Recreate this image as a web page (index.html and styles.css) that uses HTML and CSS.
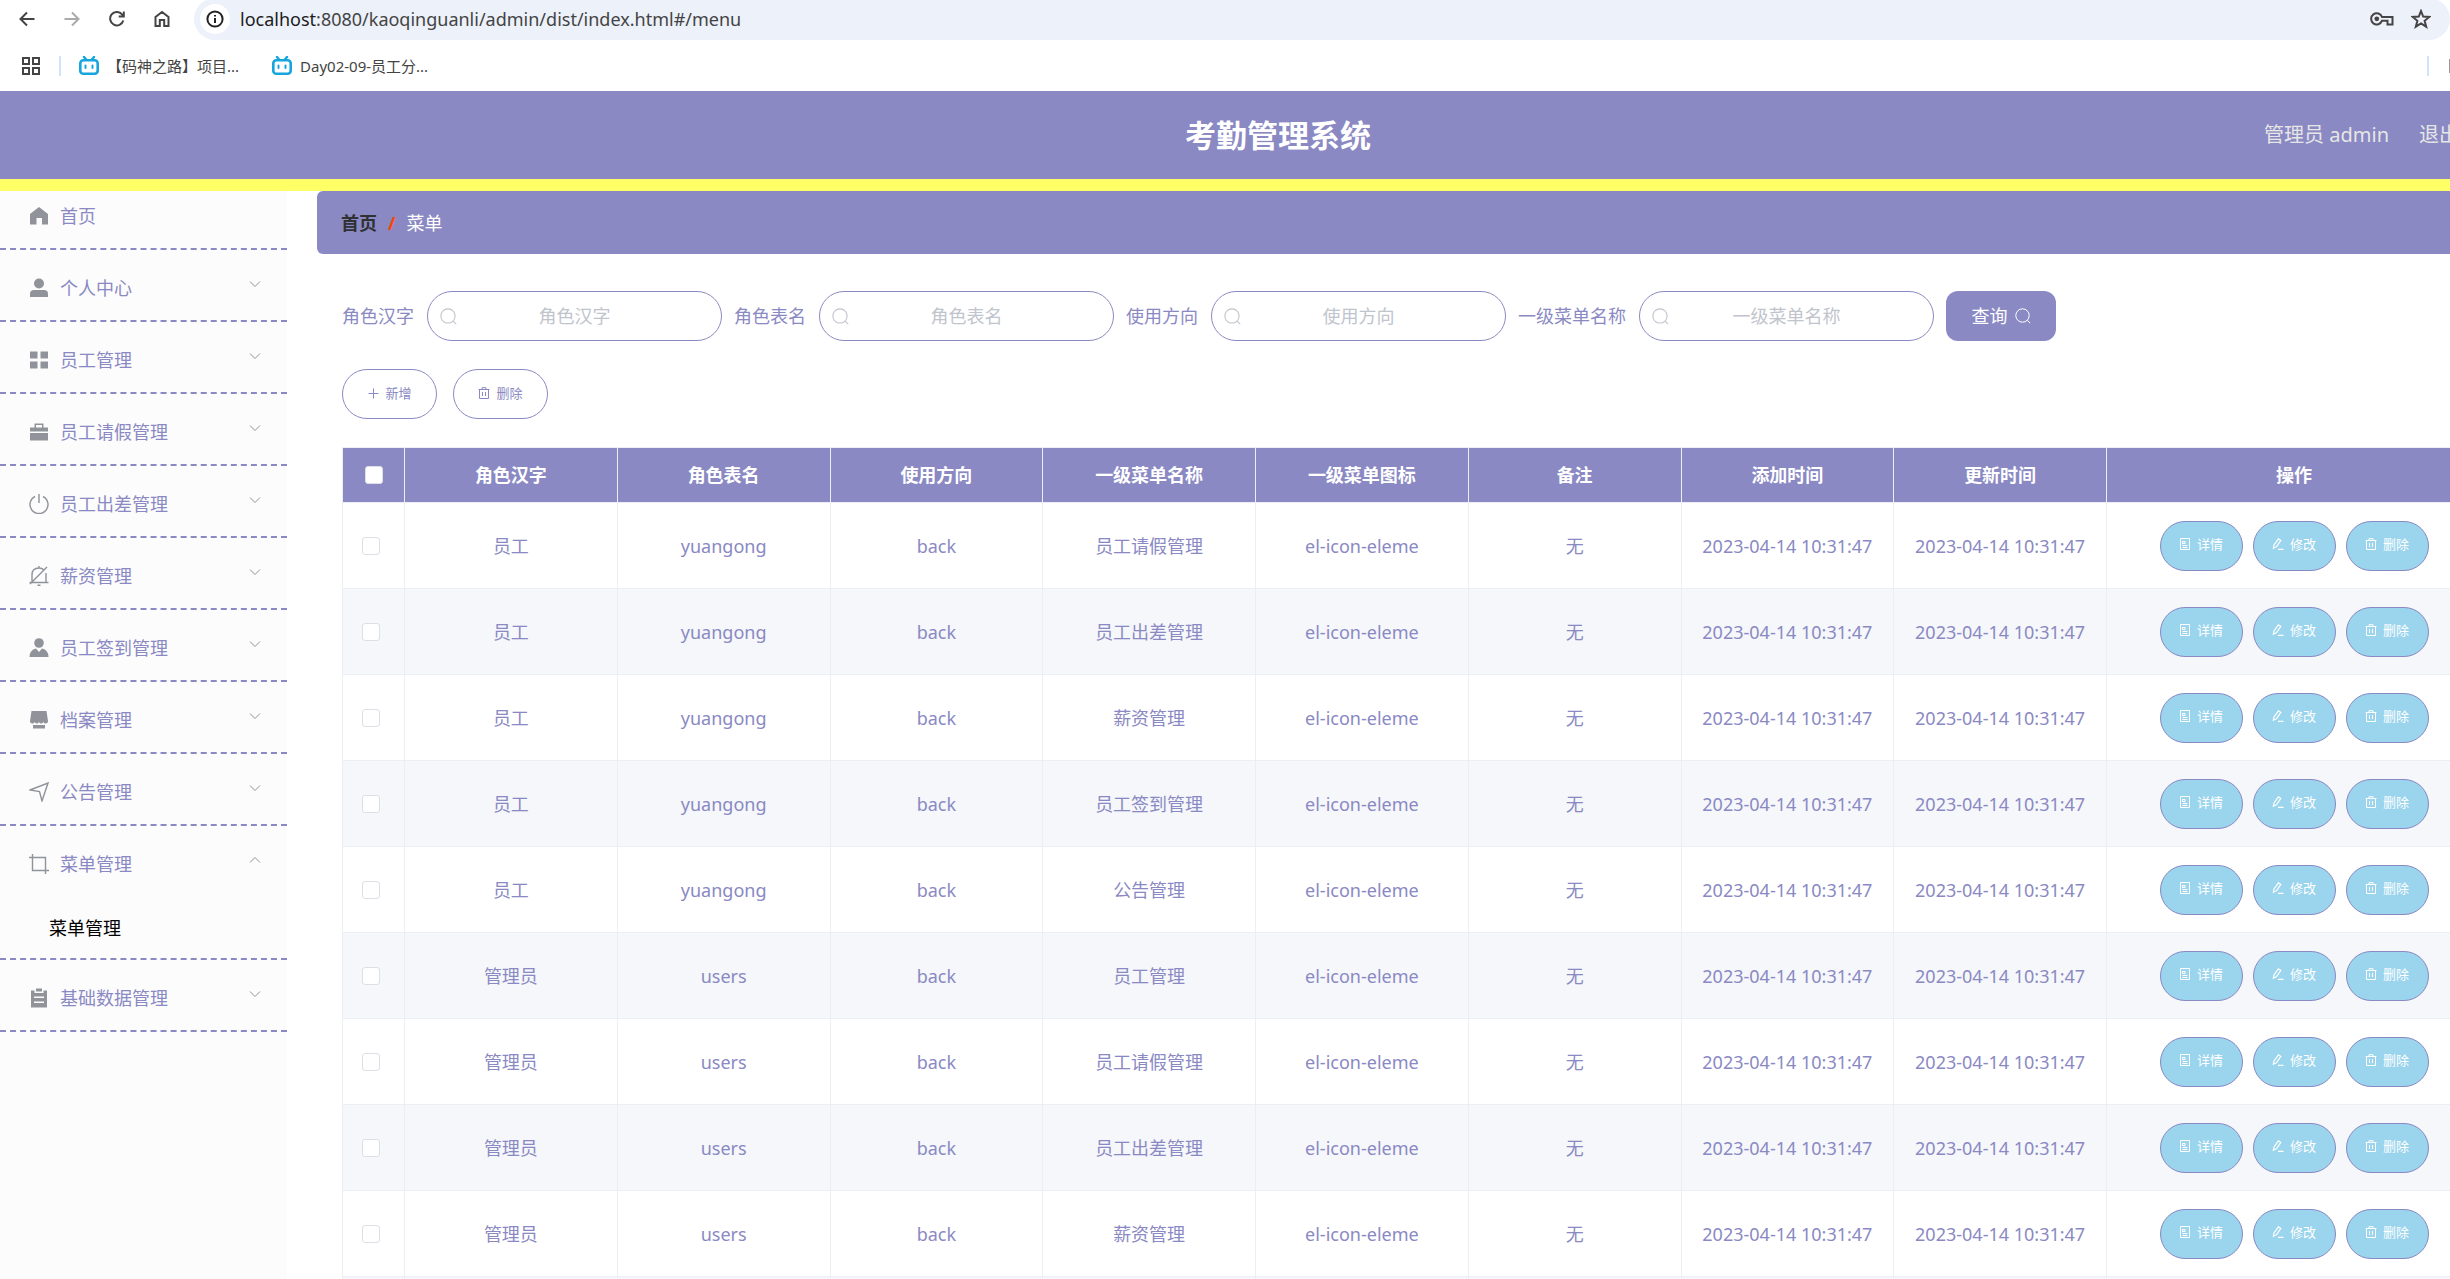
FILE: index.html
```html
<!DOCTYPE html>
<html lang="zh-CN">
<head>
<meta charset="utf-8">
<title>考勤管理系统</title>
<link rel="stylesheet" href="styles.css">
</head>
<body>
<svg class="sprite" aria-hidden="true">
  <symbol id="i-search" viewBox="0 0 16 16"><circle cx="7.5" cy="7.5" r="6.7"/><path d="M12.3 12.3L15.2 15.2"/></symbol>
  <symbol id="i-down" viewBox="0 0 12 8"><path d="M1 1.5L6 6.5L11 1.5"/></symbol>
  <symbol id="i-up" viewBox="0 0 12 8"><path d="M1 6.5L6 1.5L11 6.5"/></symbol>
  <symbol id="i-plus" viewBox="0 0 12 12"><path d="M6.5 1.500V11.500M1.500 6.500H11.500"/></symbol>
  <symbol id="i-trash" viewBox="0 0 12 12"><path d="M0.5 2.5H11.5M1.5 2.5V11.5H10.5V2.5M4 2.5V0.7H8V2.5M4.5 5V9M7.5 5V9"/></symbol>
  <symbol id="i-doc" viewBox="0 0 12 12"><path d="M1.5 0.5H10.5V11.5H1.5ZM3.5 3.5H6V5.500H3.500ZM3.500 7.500H8.500M3.500 9.500H8.500"/></symbol>
  <symbol id="i-edit" viewBox="0 0 12 12"><path d="M1.3 10.3L2 7L6.4 0.8L8.8 2.4L4.4 8.8ZM6 11.3H11.5" stroke-width="1.2"/></symbol>
  <symbol id="i-bili" viewBox="0 0 20 20"><path d="M5 1L7.5 4M15 1L12.5 4" stroke="#16a5dc" stroke-width="2.4" stroke-linecap="round"/><rect x="1.3" y="4.3" width="17.4" height="13.4" rx="3" fill="#fff" stroke="#16a5dc" stroke-width="2.6"/><path d="M6.5 9.5V12M13.5 9.5V12" stroke="#16a5dc" stroke-width="2" stroke-linecap="round"/></symbol>
</svg>

<div class="browser">
  <div class="toolbar">
    <div class="nav">
      <button type="button" aria-label="后退"><svg viewBox="0 0 16 16"><path d="M15.5 8H2M8 1.5L1.5 8L8 14.5"/></svg></button>
      <button type="button" class="off" aria-label="前进"><svg viewBox="0 0 16 16"><path d="M0.5 8H14M8 1.5L14.5 8L8 14.5"/></svg></button>
      <button type="button" aria-label="刷新"><svg viewBox="0 0 16 16"><path d="M14.3 9.5A6.7 6.7 0 1 1 13 3.4L14.5 5M14.8 0.5V5.6H9.7"/></svg></button>
      <button type="button" aria-label="主页"><svg viewBox="0 0 16 16"><path d="M1.5 15V6L8 1L14.5 6V15H10.2V9H5.8V15Z"/></svg></button>
    </div>
    <div class="address">
      <span class="info"><svg viewBox="0 0 18 18"><circle cx="9" cy="9" r="7.6"/><path d="M9 8V13M9 5V6.6"/></svg></span>
      <span class="url"><b>localhost</b>:8080/kaoqinguanli/admin/dist/index.html#/menu</span>
      <svg class="key" viewBox="0 0 24 14"><path d="M12 5H22.5V12.5H17.5V8.7H12A5.6 5.6 0 1 1 12 5Z"/><circle class="dot" cx="6.8" cy="6.8" r="2.4"/></svg>
      <svg class="star" viewBox="0 0 20 20"><path d="M10 2L12.2 7.6L18.3 7.9L13.6 11.8L15.2 17.7L10 14.4L4.8 17.7L6.4 11.8L1.7 7.9L7.8 7.6Z"/></svg>
    </div>
  </div>
  <div class="bookmarks">
    <svg class="grid" viewBox="0 0 18 18"><path d="M1 1H7V7H1ZM11 1H17V7H11ZM1 11H7V17H1ZM11 11H17V17H11Z"/></svg>
    <span class="sep"></span>
    <a href="#"><svg viewBox="0 0 20 20"><use href="#i-bili"/></svg>【码神之路】项目...</a>
    <a href="#"><svg viewBox="0 0 20 20"><use href="#i-bili"/></svg>Day02-09-员工分...</a>
    <span class="sep end"></span>
    <span class="folder"></span>
  </div>
</div>

<div class="app">
  <header class="header">
    <h1>考勤管理系统</h1>
    <div class="user"><span>管理员 admin</span><a href="#">退出登录</a></div>
  </header>
  <div class="body">
    <nav class="side">
      <ul>
        <li><a href="#"><svg class="ic solid" viewBox="0 0 20 20"><path d="M10 1L19 8V18.5H13V12H7.500V18.500H1V8Z"/></svg>首页</a></li>
        <li><a href="#"><svg class="ic solid" viewBox="0 0 20 20"><circle cx="10" cy="5.500" r="5"/><path d="M1 19V16Q1 12 5 12H15Q19 12 19 16V19Z"/></svg>个人中心<svg class="arrow"><use href="#i-down"/></svg></a></li>
        <li><a href="#"><svg class="ic solid" viewBox="0 0 20 20"><path d="M1 1.500H8.500V8.500H1ZM11.500 1.500H19V8.500H11.500ZM1 11.500H8.500V18.500H1ZM11.500 11.500H19V18.500H11.500Z"/></svg>员工管理<svg class="arrow"><use href="#i-down"/></svg></a></li>
        <li><a href="#"><svg class="ic solid" viewBox="0 0 20 20"><path d="M1 5.500H5.500V1.500H14.500V5.500H19V9.500H1ZM7 3V5.500H13V3ZM1 11H19V18.500H1Z" fill-rule="evenodd"/></svg>员工请假管理<svg class="arrow"><use href="#i-down"/></svg></a></li>
        <li><a href="#"><svg class="ic" viewBox="0 0 20 20"><path d="M10 0V9M6 2.500A9 9 0 1 0 14 2.500"/></svg>员工出差管理<svg class="arrow"><use href="#i-down"/></svg></a></li>
        <li><a href="#"><svg class="ic" viewBox="0 0 20 20"><path d="M0.500 16.500H19.500M3 16V9Q3 2 10 2Q13 2 15 4M17 7V16M1 18L18 1M10 0V2M8.500 19.300H11.500"/></svg>薪资管理<svg class="arrow"><use href="#i-down"/></svg></a></li>
        <li><a href="#"><svg class="ic solid" viewBox="0 0 20 20"><circle cx="10" cy="5" r="4.800"/><path d="M0.500 19Q0.500 12 7 10.500L10 14L13 10.500Q19.500 12 19.500 19Z"/></svg>员工签到管理<svg class="arrow"><use href="#i-down"/></svg></a></li>
        <li><a href="#"><svg class="ic solid" viewBox="0 0 20 20"><path d="M2.500 1H17.500L19 11Q19 13.500 16.500 13.500Q15 13.500 14.300 12Q13.500 13.500 12 13.500Q10.800 13.500 10 12Q9.200 13.500 8 13.500Q6.500 13.500 5.700 12Q5 13.500 3.500 13.500Q1 13.500 1 11ZM4 15H16V18.500H4Z"/></svg>档案管理<svg class="arrow"><use href="#i-down"/></svg></a></li>
        <li><a href="#"><svg class="ic" viewBox="0 0 20 20"><path d="M1 8L19 1L13 19L10.500 9.500Z"/></svg>公告管理<svg class="arrow"><use href="#i-down"/></svg></a></li>
        <li><a href="#"><svg class="ic" viewBox="0 0 20 20"><path d="M0 3.500H16.500V20M3.500 0V16.500H20"/></svg>菜单管理<svg class="arrow"><use href="#i-up"/></svg></a>
          <a class="sub" href="#">菜单管理</a></li>
        <li><a href="#"><svg class="ic solid" viewBox="0 0 20 20"><path d="M2 2.500H5.500V5H14.500V2.500H18V19.500H2ZM7 0.500H13V3.500H7ZM5 8.500V10H15V8.500ZM5 13.500V15H15V13.500Z" fill-rule="evenodd"/></svg>基础数据管理<svg class="arrow"><use href="#i-down"/></svg></a></li>
      </ul>
    </nav>
    <main class="main">
      <div class="crumb"><b>首页</b><i>/</i><span>菜单</span></div>
      <form class="search">
        <label for="f1">角色汉字</label><span class="field"><svg><use href="#i-search"/></svg><input id="f1" type="text" placeholder="角色汉字"></span>
        <label for="f2">角色表名</label><span class="field"><svg><use href="#i-search"/></svg><input id="f2" type="text" placeholder="角色表名"></span>
        <label for="f3">使用方向</label><span class="field"><svg><use href="#i-search"/></svg><input id="f3" type="text" placeholder="使用方向"></span>
        <label for="f4">一级菜单名称</label><span class="field"><svg><use href="#i-search"/></svg><input id="f4" type="text" placeholder="一级菜单名称"></span>
        <button type="button" class="query">查询<svg><use href="#i-search"/></svg></button>
      </form>
      <div class="tools">
        <button type="button" class="pill"><svg><use href="#i-plus"/></svg>新增</button>
        <button type="button" class="pill"><svg><use href="#i-trash"/></svg>删除</button>
      </div>
      <table class="list">
        <colgroup><col class="c-check"><col><col><col><col><col><col><col><col><col class="c-ops"></colgroup>
        <thead>
          <tr><th><input type="checkbox" aria-label="全选"></th><th>角色汉字</th><th>角色表名</th><th>使用方向</th><th>一级菜单名称</th><th>一级菜单图标</th><th>备注</th><th>添加时间</th><th>更新时间</th><th>操作</th></tr>
        </thead>
        <tbody>
          <tr><td><input type="checkbox" aria-label="选择"></td><td>员工</td><td>yuangong</td><td>back</td><td>员工请假管理</td><td>el-icon-eleme</td><td>无</td><td>2023-04-14 10:31:47</td><td>2023-04-14 10:31:47</td><td><div class="ops"><button type="button"><svg><use href="#i-doc"/></svg>详情</button><button type="button"><svg><use href="#i-edit"/></svg>修改</button><button type="button"><svg><use href="#i-trash"/></svg>删除</button></div></td></tr>
          <tr><td><input type="checkbox" aria-label="选择"></td><td>员工</td><td>yuangong</td><td>back</td><td>员工出差管理</td><td>el-icon-eleme</td><td>无</td><td>2023-04-14 10:31:47</td><td>2023-04-14 10:31:47</td><td><div class="ops"><button type="button"><svg><use href="#i-doc"/></svg>详情</button><button type="button"><svg><use href="#i-edit"/></svg>修改</button><button type="button"><svg><use href="#i-trash"/></svg>删除</button></div></td></tr>
          <tr><td><input type="checkbox" aria-label="选择"></td><td>员工</td><td>yuangong</td><td>back</td><td>薪资管理</td><td>el-icon-eleme</td><td>无</td><td>2023-04-14 10:31:47</td><td>2023-04-14 10:31:47</td><td><div class="ops"><button type="button"><svg><use href="#i-doc"/></svg>详情</button><button type="button"><svg><use href="#i-edit"/></svg>修改</button><button type="button"><svg><use href="#i-trash"/></svg>删除</button></div></td></tr>
          <tr><td><input type="checkbox" aria-label="选择"></td><td>员工</td><td>yuangong</td><td>back</td><td>员工签到管理</td><td>el-icon-eleme</td><td>无</td><td>2023-04-14 10:31:47</td><td>2023-04-14 10:31:47</td><td><div class="ops"><button type="button"><svg><use href="#i-doc"/></svg>详情</button><button type="button"><svg><use href="#i-edit"/></svg>修改</button><button type="button"><svg><use href="#i-trash"/></svg>删除</button></div></td></tr>
          <tr><td><input type="checkbox" aria-label="选择"></td><td>员工</td><td>yuangong</td><td>back</td><td>公告管理</td><td>el-icon-eleme</td><td>无</td><td>2023-04-14 10:31:47</td><td>2023-04-14 10:31:47</td><td><div class="ops"><button type="button"><svg><use href="#i-doc"/></svg>详情</button><button type="button"><svg><use href="#i-edit"/></svg>修改</button><button type="button"><svg><use href="#i-trash"/></svg>删除</button></div></td></tr>
          <tr><td><input type="checkbox" aria-label="选择"></td><td>管理员</td><td>users</td><td>back</td><td>员工管理</td><td>el-icon-eleme</td><td>无</td><td>2023-04-14 10:31:47</td><td>2023-04-14 10:31:47</td><td><div class="ops"><button type="button"><svg><use href="#i-doc"/></svg>详情</button><button type="button"><svg><use href="#i-edit"/></svg>修改</button><button type="button"><svg><use href="#i-trash"/></svg>删除</button></div></td></tr>
          <tr><td><input type="checkbox" aria-label="选择"></td><td>管理员</td><td>users</td><td>back</td><td>员工请假管理</td><td>el-icon-eleme</td><td>无</td><td>2023-04-14 10:31:47</td><td>2023-04-14 10:31:47</td><td><div class="ops"><button type="button"><svg><use href="#i-doc"/></svg>详情</button><button type="button"><svg><use href="#i-edit"/></svg>修改</button><button type="button"><svg><use href="#i-trash"/></svg>删除</button></div></td></tr>
          <tr><td><input type="checkbox" aria-label="选择"></td><td>管理员</td><td>users</td><td>back</td><td>员工出差管理</td><td>el-icon-eleme</td><td>无</td><td>2023-04-14 10:31:47</td><td>2023-04-14 10:31:47</td><td><div class="ops"><button type="button"><svg><use href="#i-doc"/></svg>详情</button><button type="button"><svg><use href="#i-edit"/></svg>修改</button><button type="button"><svg><use href="#i-trash"/></svg>删除</button></div></td></tr>
          <tr><td><input type="checkbox" aria-label="选择"></td><td>管理员</td><td>users</td><td>back</td><td>薪资管理</td><td>el-icon-eleme</td><td>无</td><td>2023-04-14 10:31:47</td><td>2023-04-14 10:31:47</td><td><div class="ops"><button type="button"><svg><use href="#i-doc"/></svg>详情</button><button type="button"><svg><use href="#i-edit"/></svg>修改</button><button type="button"><svg><use href="#i-trash"/></svg>删除</button></div></td></tr>
          <tr><td><input type="checkbox" aria-label="选择"></td><td></td><td></td><td></td><td></td><td></td><td></td><td></td><td></td><td></td></tr>
        </tbody>
      </table>
    </main>
  </div>
</div>
</body>
</html>
```

FILE: styles.css
```css
:root {
  --purple: #8a89c3;
  --line: #ebeef5;
  --grey: #909399;
}

* { box-sizing: border-box; }

body {
  margin: 0;
  height: 100vh;
  overflow: hidden;
  display: flex;
  flex-direction: column;
  background: #fff;
  color: var(--purple);
  font: 18px/24px "Noto Sans", "Noto Sans CJK SC", sans-serif;
}

a { color: inherit; text-decoration: none; }
button, input { font: inherit; color: inherit; margin: 0; }
button { cursor: pointer; }
svg { display: block; flex: none; fill: none; stroke: currentColor; }
.sprite { position: absolute; width: 0; height: 0; }

/* Browser chrome */
.browser { flex: none; color: #444; }
.toolbar { display: flex; height: 40px; overflow: hidden; }
.nav { display: flex; align-items: center; gap: 29px; width: 194px; height: 38px; padding-left: 19px; flex: none; }
.nav button { padding: 0; border: 0; background: none; color: #444; }
.nav .off { color: #aaa; }
.nav svg { width: 16px; height: 16px; stroke-width: 2; }
.address {
  flex: 1;
  display: flex;
  align-items: center;
  height: 42px;
  margin-top: -2px;
  padding: 0 19px 0 6px;
  border-radius: 21px;
  background: #ecf1fa;
}
.info { display: flex; align-items: center; justify-content: center; width: 30px; height: 30px; margin-right: 10px; border-radius: 50%; background: #fff; color: #222; }
.info svg { width: 18px; height: 18px; stroke-width: 2; }
.url { flex: 1; }
.url b { font-weight: 400; color: #1c1c1c; }
.key { width: 24px; height: 14px; stroke-width: 2; }
.key .dot { fill: currentColor; stroke: none; }
.star { width: 20px; height: 20px; margin-left: 17px; stroke-width: 2; }
.bookmarks { display: flex; align-items: center; height: 51px; padding: 0 0 0 22px; font-size: 15px; }
.grid { width: 18px; height: 18px; stroke-width: 2; }
.sep { width: 2px; height: 20px; margin: 0 18px 0 19px; background: #d3e3fd; }
.sep.end { margin: 0 20px 0 auto; }
.folder { width: 1px; height: 14px; background: #999; }
.bookmarks a { display: flex; align-items: center; gap: 8px; margin-right: 33px; }
.bookmarks a svg { width: 20px; height: 20px; }

/* The application is wider than the window and runs off its right edge */
.app { flex: 1; display: flex; flex-direction: column; width: calc(100% + 106px); min-height: 0; }
.header {
  flex: none;
  display: grid;
  grid-template-columns: 1fr auto 1fr;
  align-items: center;
  height: 100px;
  padding: 0 57px;
  background: var(--purple);
  border-bottom: 12px solid #ff6;
}
.header h1 { grid-column: 2; margin: 0; font-size: 31px; line-height: 40px; font-weight: 700; color: #fff; }
.user { display: flex; justify-content: flex-end; gap: 30px; font-size: 20px; color: #e6e6e6; }
.body { flex: 1; display: flex; min-height: 0; }

/* Side menu */
.side { flex: none; width: 287px; background: #fcfcfc; }
.side ul { list-style: none; margin: 0; padding: 0; }
.side li { padding: 14px 0 8px; border-bottom: 2px dashed var(--purple); }
.side li:first-child { padding-top: 1px; }
.side a { display: flex; align-items: center; height: 48px; padding: 0 26px 0 29px; }
.ic { width: 20px; height: 20px; margin-right: 11px; color: var(--grey); stroke-width: 1.4; }
.ic.solid { fill: currentColor; stroke: none; }
.arrow { width: 12px; height: 8px; margin: 0 0 8px auto; color: var(--grey); }
.side .sub { height: 44px; margin-top: 18px; padding-left: 49px; color: #000; }

/* Content */
.main { flex: 1; min-width: 0; margin-left: 30px; padding-right: 30px; }
.crumb { display: flex; align-items: center; height: 63px; padding-left: 24px; border-radius: 6px; background: var(--purple); color: #fff; }
.crumb b { color: #303133; }
.crumb i { margin: 0 11px; font-style: normal; font-weight: 700; color: #ff4500; }
.search { display: flex; align-items: center; margin: 37px 44px 0 25px; }
.search label { margin-right: 13px; }
.field { display: flex; align-items: center; width: 295px; height: 50px; margin-right: 12px; padding: 0 12px; border: 1px solid var(--purple); border-radius: 25px; color: #c0c4cc; }
.field svg { width: 17px; height: 17px; }
.field input { flex: 1; min-width: 0; padding: 0 17px 0 0; border: 0; outline: 0; background: none; text-align: center; color: var(--purple); }
.field input::placeholder { color: #c0c4cc; }
.query { display: flex; align-items: center; justify-content: center; gap: 7px; width: 110px; height: 50px; border: 0; border-radius: 12px; background: var(--purple); color: #fff; }
.query svg { width: 16px; height: 16px; }
.tools { display: flex; gap: 16px; margin: 28px 0 28px 25px; }
.pill, .ops button { display: flex; align-items: center; justify-content: center; gap: 6px; height: 50px; padding: 0 0 3px; border: 1px solid var(--purple); border-radius: 25px; font-size: 13px; }
.pill { width: 95px; background: #fff; }
.pill svg, .ops svg { width: 12px; height: 12px; }
.ops { display: flex; justify-content: center; gap: 10px; }
.ops button { width: 83px; background: #9ad4ed; color: #fff; }

.list { width: calc(100% - 69px); margin-left: 25px; table-layout: fixed; border-collapse: collapse; }
.c-check { width: 62px; }
.c-ops { width: 375px; }
.list th, .list td { padding: 0; border: 1px solid var(--line); text-align: center; }
.list th { height: 55px; background: var(--purple); color: #fff; font-weight: 700; }
.list td { height: 86px; }
.list tbody tr:nth-child(even) { background: #f5f7fa; }
.list input { appearance: none; display: block; width: 18px; height: 18px; margin: 0 auto; border: 1px solid #dcdfe6; border-radius: 3px; background: #fff; }
.list td input { margin-left: 19px; }
```
